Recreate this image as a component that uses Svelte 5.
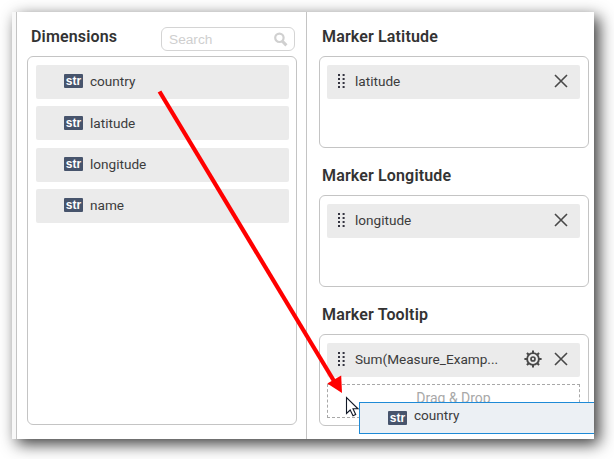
<script>
  const dimensions = ['country', 'latitude', 'longitude', 'name'];
  const targets = [
    { title: 'Marker Latitude', field: 'latitude' },
    { title: 'Marker Longitude', field: 'longitude' },
    { title: 'Marker Tooltip', field: 'Sum(Measure_Examp...', settings: true, drop: true }
  ];
  const teeth = [0, 45, 90, 135, 180, 225, 270, 315];
</script>

<div class="stage">
  <div class="window">
    <div class="gutter"></div>
    <section class="dims">
      <header>
        <h2>Dimensions</h2>
        <div class="search">
          <span>Search</span>
          <svg width="14" height="15" viewBox="0 0 14 15" fill="none" stroke="#d0d0d0">
            <circle cx="5.4" cy="5.8" r="4.2" stroke-width="2.2" />
            <path d="M8.4 9.2 L12.4 13.4" stroke-width="3" />
          </svg>
        </div>
      </header>
      <div class="box list">
        {#each dimensions as name}
          <div class="row dim"><b class="tag">str</b><span>{name}</span></div>
        {/each}
      </div>
    </section>
    <section class="targets">
      {#each targets as t}
        <div class="target">
          <h2>{t.title}</h2>
          <div class="box">
            <div class="row field">
              <svg class="grip" width="7" height="14" viewBox="0 0 7 14" fill="#33333f">
                {#each [0, 4, 8, 12] as y}
                  <rect x="0" {y} width="2" height="2" />
                  <rect x="4.6" {y} width="2" height="2" />
                {/each}
              </svg>
              <span class="name">{t.field}</span>
              {#if t.settings}
                <svg class="gear" width="18" height="18" viewBox="-9 -9 18 18" fill="none" stroke="#484848">
                  <circle r="5.9" stroke-width="1.9" />
                  <circle r="2" stroke-width="1.7" />
                  {#each teeth as a}
                    <path d="M0 -6 V-8.6" stroke-width="2" transform="rotate({a})" />
                  {/each}
                </svg>
              {/if}
              <svg class="close" width="14" height="14" viewBox="0 0 14 14" fill="none" stroke="#484848" stroke-width="1.6">
                <path d="M1 1 L13 13 M13 1 L1 13" />
              </svg>
            </div>
            {#if t.drop}<div class="drop">Drag &amp; Drop</div>{/if}
          </div>
        </div>
      {/each}
    </section>
    <div class="ghost"><b class="tag">str</b><span>country</span></div>
  </div>
  <svg class="overlay" width="614" height="459" viewBox="0 0 614 459">
    <path d="M159.5 91.5 L334 381" stroke="#f00" stroke-width="4.2" fill="none" />
    <path d="M342 393 L327.3 383.5 L341.2 375.5 Z" fill="#f00" />
    <path d="M346.5 397.5 V413.5 L350.2 410 L353 415.7 L355.7 414.5 L353 408.8 H358 Z" fill="#fff" stroke="#111827" stroke-width="1.1" />
  </svg>
</div>

<style>
  :global(body) { background: #fff; }
  .stage {
    position: relative;
    width: 614px;
    height: 459px;
    box-sizing: border-box;
    padding: 12px;
    overflow: hidden;
    font: 13.6px/16px Roboto, sans-serif;
    color: #3c3c3c;
  }
  .stage * { box-sizing: border-box; }
  .window {
    position: relative;
    width: 582px;
    height: 427px;
    display: flex;
    background: #fff;
    box-shadow: 5px 5px 15px rgba(0, 0, 0, 0.78);
  }
  .gutter { width: 5px; background: #f8f8f8; border-right: 1px solid #c4c4c4; }
  h2 {
    margin: 0;
    font-size: 16px;
    line-height: 20px;
    font-weight: 600;
    letter-spacing: 0.15px;
    color: #333;
  }
  .dims { width: 290px; border-right: 1px solid #c4c4c4; padding: 15px 9px 0 10px; }
  .dims header { height: 29px; display: flex; justify-content: space-between; padding: 0 2px 0 4px; }
  .search {
    width: 134px;
    height: 24px;
    border: 1px solid #d4d4d4;
    border-radius: 6px;
    display: flex;
    align-items: center;
    justify-content: space-between;
    padding: 0 6px 0 7px;
    font: 13.7px "Liberation Sans", sans-serif;
    color: #cfcfcf;
  }
  .box { border: 1px solid #c4c4c4; border-radius: 6px; }
  .list {
    width: 270px;
    height: 369px;
    padding: 8px 7px 0 8px;
    display: flex;
    flex-direction: column;
    gap: 7.33px;
  }
  .row { height: 34px; flex: none; background: #ebebeb; border-radius: 2px; display: flex; align-items: center; padding-bottom: 1.2px; }
  .dim { padding-left: 28px; }
  .tag {
    width: 19px;
    height: 14px;
    border-radius: 1px;
    background: #47546c;
    color: #fff;
    font: bold 12px/15px "Liberation Sans", sans-serif;
    text-align: center;
    margin: 0 7px 0 0;
  }
  .targets { padding: 15px 0 0 12px; }
  .target { height: 139px; }
  .target h2 { padding-left: 3px; margin-bottom: 9px; }
  .target .box { width: 270px; height: 92px; padding: 8px 8px 0 7px; }
  .field { padding: 0 12px 1.2px 11px; }
  .grip { margin: 0 10px 0.8px 0; }
  .name { flex: 1; white-space: nowrap; }
  .gear { margin-right: 12px; }
  .drop {
    height: 34px;
    margin-top: 7px;
    border: 1px dashed #a8a8a8;
    text-align: center;
    font-size: 14px;
    line-height: 27px;
    color: #a8a8a8;
  }
  .ghost {
    position: absolute;
    left: 347px;
    top: 390px;
    width: 235px;
    height: 32px;
    background: #ecf0f4;
    border: 1px solid #1e8ad6;
    border-right: 0;
    display: flex;
    padding: 7px 0 0 28px;
    line-height: 11px;
  }
  .ghost .tag { margin-top: 1px; }
  .overlay { position: absolute; left: 0; top: 0; }
</style>
